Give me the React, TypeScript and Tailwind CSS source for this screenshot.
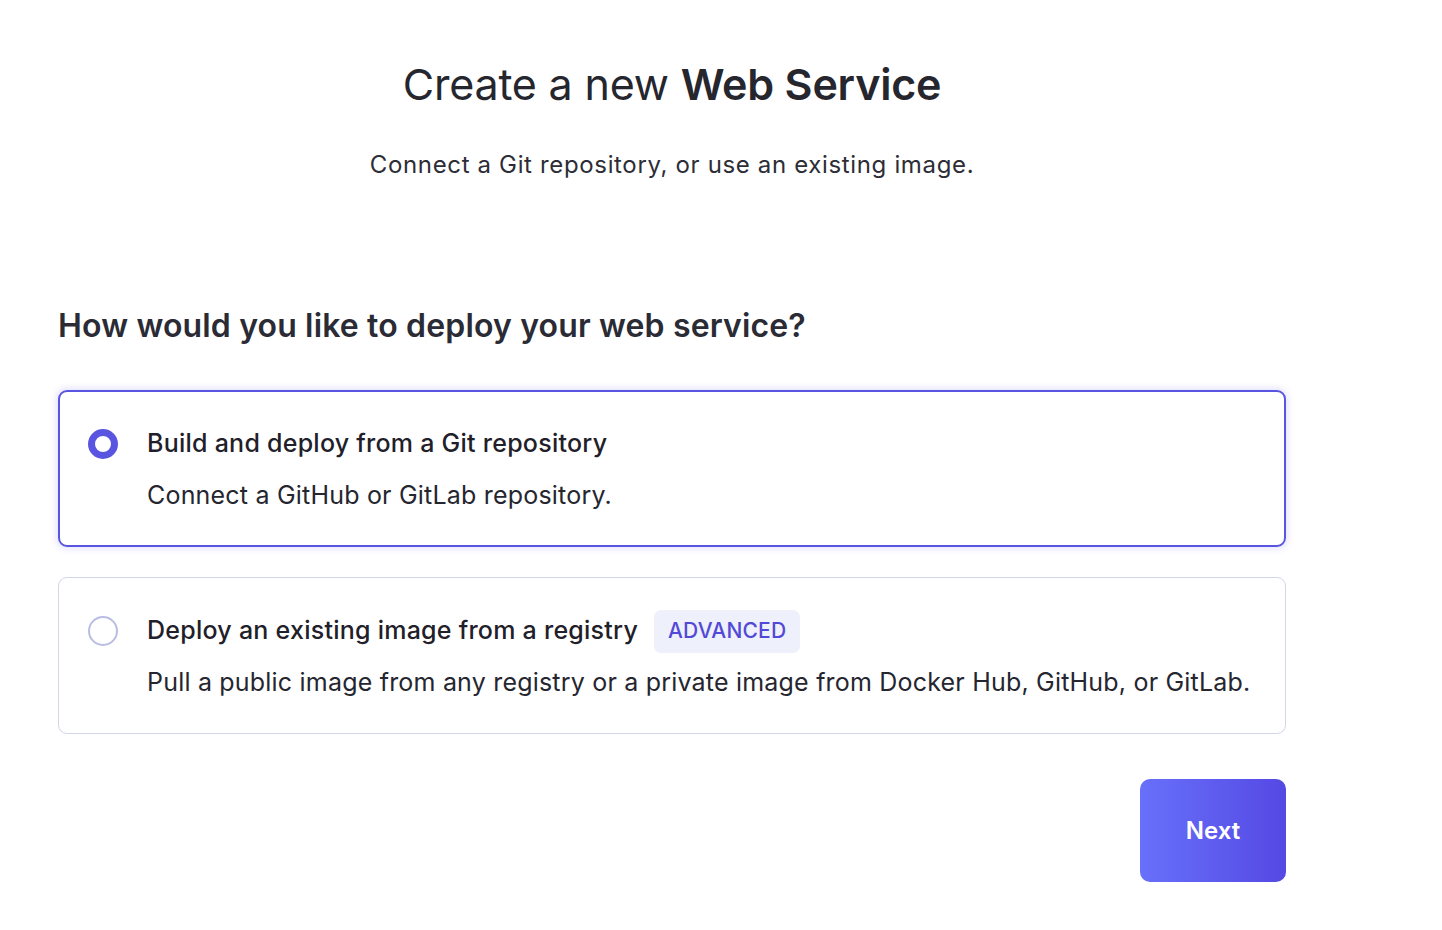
import React from 'react';

type Option = {
    id: string;
    title: string;
    description: string;
    badge?: string;
};

const options: Option[] = [
    {
        id: 'git',
        title: 'Build and deploy from a Git repository',
        description: 'Connect a GitHub or GitLab repository.',
    },
    {
        id: 'image',
        title: 'Deploy an existing image from a registry',
        description: 'Pull a public image from any registry or a private image from Docker Hub, GitHub, or GitLab.',
        badge: 'ADVANCED',
    },
];

function Radio({ checked }: { checked: boolean }) {
    return checked ? (
        <div className="w-[30px] h-[30px] rounded-full border-[7px] border-[#5a55e0] bg-white shrink-0" />
    ) : (
        <div className="w-[30px] h-[30px] rounded-full border-2 border-[#b9bde3] bg-white shrink-0" />
    );
}

export default function App() {
    const selected = 'git';

    return (
        <div className="min-h-[930px] bg-white text-[#24252f]" style={{ fontFamily: 'Inter, "Noto Sans", sans-serif' }}>
            <div className="w-[1228px] ml-[58px] pt-[58px]">
                {/* Header */}
                <h1 className="text-center text-[43px] leading-[52px] font-normal tracking-[-0.2px] text-[#25262e]">
                    Create a new <span className="font-semibold">Web Service</span>
                </h1>
                <p className="mt-[39px] text-center text-[24px] leading-[32px] tracking-[0.65px] text-[#2c2d36]">
                    Connect a Git repository, or use an existing image.
                </p>

                {/* Question */}
                <h2 className="mt-[125px] text-[32px] leading-[40px] font-semibold tracking-[0.15px] text-[#2a2b35]">
                    How would you like to deploy your web service?
                </h2>

                <div className="mt-[44px] flex flex-col gap-[30px]">
                    {options.map((opt) => {
                        const isActive = opt.id === selected;
                        return (
                            <div
                                key={opt.id}
                                className={
                                    isActive
                                        ? 'h-[157px] rounded-[9px] border-2 border-[#5a55e0] shadow-[0_0_6px_2px_rgba(110,100,240,0.18)] pl-[28px] pr-6 flex items-start'
                                        : 'h-[157px] rounded-[9px] border border-[#d3d6e6] pl-[29px] pr-6 flex items-start'
                                }
                            >
                                <div className={isActive ? 'flex gap-[29px] pt-[37px]' : 'flex gap-[29px] pt-[38px]'}>
                                    <Radio checked={isActive} />
                                    <div className="flex flex-col">
                                        <div className="flex items-center gap-4 h-[30px]">
                                            <span className="text-[25px] font-medium text-[#1f2029] tracking-[0.25px]">{opt.title}</span>
                                            {opt.badge && (
                                                <span className="h-[43px] px-[14px] rounded-[7px] bg-[#eef0fc] text-[#5249d6] text-[21px] font-medium flex items-center tracking-[0.2px]">
                                                    {opt.badge}
                                                </span>
                                            )}
                                        </div>
                                        <p className="mt-[21px] text-[25px] leading-[30px] text-[#25262f] tracking-[0.2px]">
                                            {opt.description}
                                        </p>
                                    </div>
                                </div>
                            </div>
                        );
                    })}
                </div>

                {/* Footer */}
                <div className="mt-[45px] flex justify-end">
                    <button className="w-[146px] h-[103px] rounded-[10px] bg-gradient-to-r from-[#6870fa] to-[#5548e4] text-white text-[24px] font-semibold">
                        Next
                    </button>
                </div>
            </div>
        </div>
    );
}
